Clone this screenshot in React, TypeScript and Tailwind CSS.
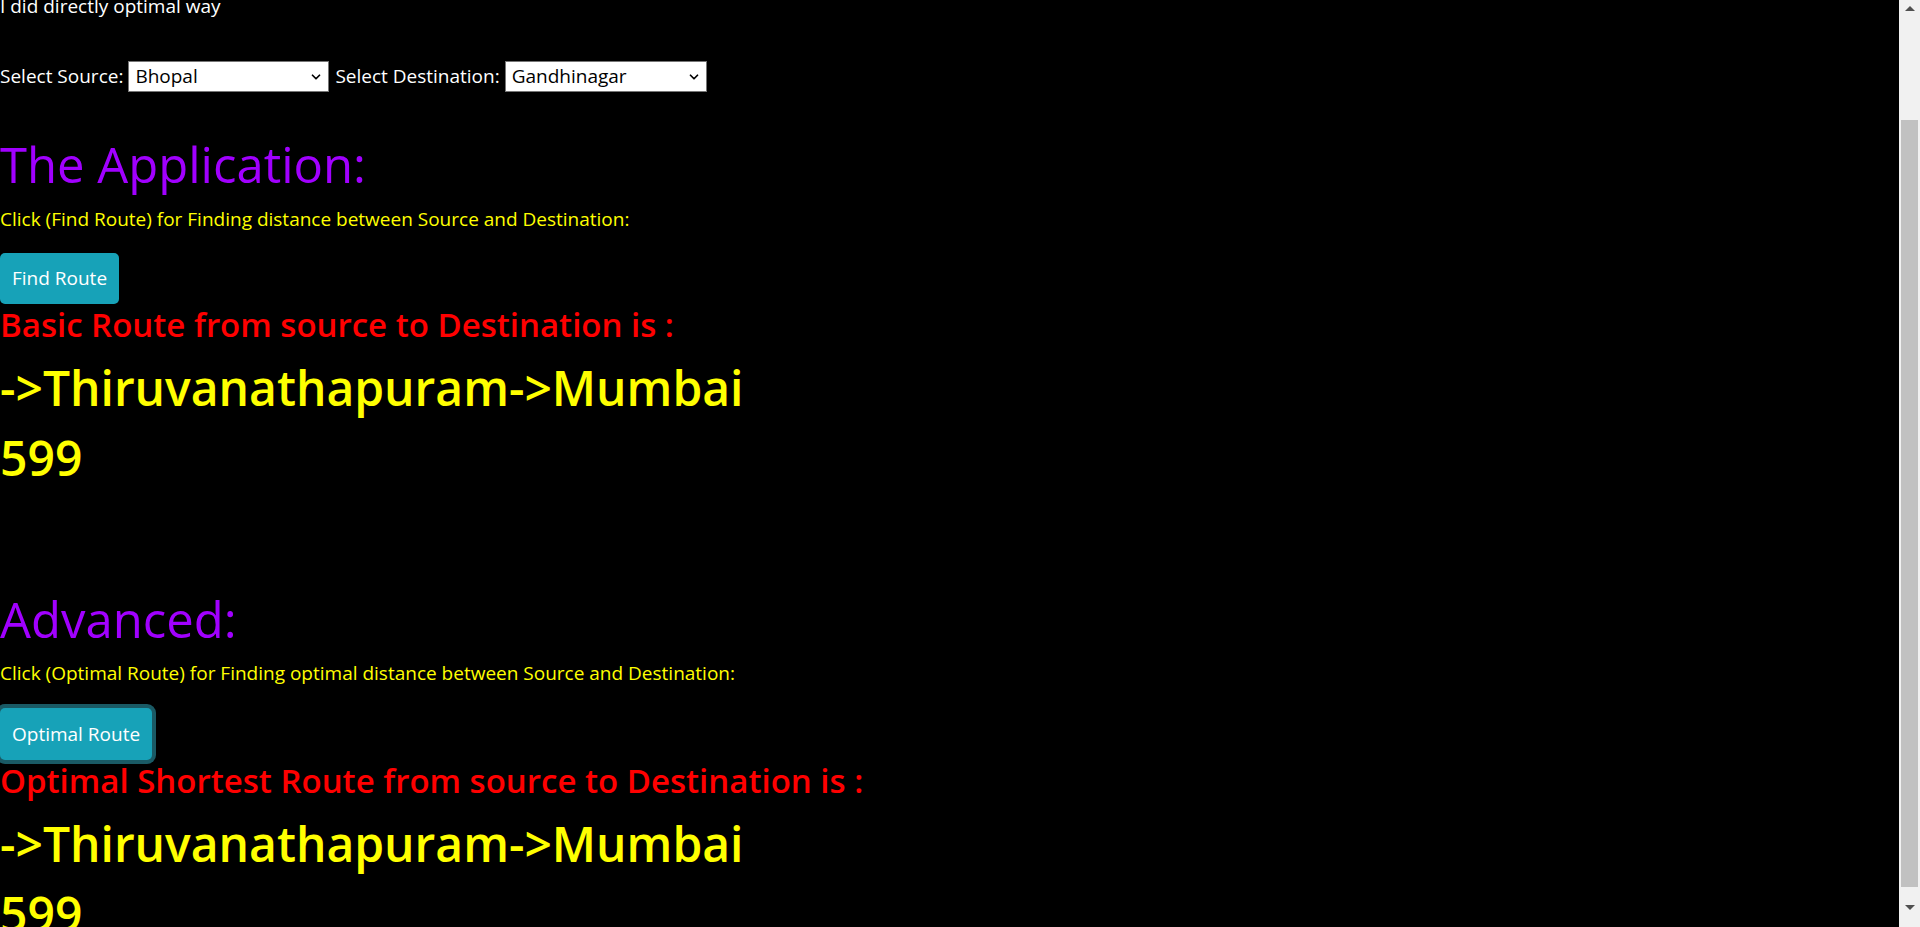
import { ChevronDown } from "lucide-react";

const cities = [
  "Bhopal",
  "Gandhinagar",
  "Mumbai",
  "Thiruvanathapuram",
  "Chennai",
  "Kolkata",
];

const CitySelect = ({ value, width }: { value: string; width: string }) => (
  <div className={`relative h-[31px] ${width}`}>
    <select
      defaultValue={value}
      className="appearance-none w-full h-full bg-white border border-[#767676] text-black pl-[6px] pr-[28px] text-[19px] leading-[29px] outline-none"
    >
      {cities.map((c) => (
        <option key={c} value={c}>
          {c}
        </option>
      ))}
    </select>
    <ChevronDown
      strokeWidth={3}
      className="absolute right-[6px] top-[9px] w-[14px] h-[14px] text-black pointer-events-none"
    />
  </div>
);

const RouteResult = ({ title, route, distance }: { title: string; route: string; distance: number }) => (
  <>
    <div className="h-[42px] leading-[42px] text-[33px] font-semibold text-[#ff0000] whitespace-nowrap">
      {title}
    </div>
    <div className="mt-[12px] h-[60px] leading-[60px] text-[48px] font-semibold text-[#ffff00] whitespace-nowrap">
      {route}
    </div>
    <div className="mt-[10px] h-[60px] leading-[60px] text-[48px] font-semibold text-[#ffff00]">
      {distance}
    </div>
  </>
);

export default function App() {
  const route = "->Thiruvanathapuram->Mumbai";

  return (
    <div
      className="flex w-full h-[927px] overflow-hidden bg-black"
      style={{ fontFamily: '"Open Sans", "Noto Sans", sans-serif' }}
    >
      <div className="flex-1 flex flex-col items-start overflow-hidden">
        <div className="-mt-[6px] h-[24px] leading-[24px] text-[19px] text-white whitespace-nowrap">
          I did directly optimal way
        </div>

        {/* source / destination pickers */}
        <div className="mt-[43px] flex items-center h-[31px] text-[19px] text-white gap-[5px]">
          <span className="leading-[31px]">Select Source:</span>
          <CitySelect value="Bhopal" width="w-[201px]" />
          <span className="leading-[31px] ml-[1px]">Select Destination:</span>
          <CitySelect value="Gandhinagar" width="w-[202px]" />
        </div>

        <h1 className="mt-[42px] h-[60px] leading-[60px] text-[49px] text-[#a100ff] whitespace-nowrap">
          The Application:
        </h1>
        <p className="mt-[10px] h-[30px] leading-[30px] text-[19px] text-[#ffff00] whitespace-nowrap">
          Click (Find Route) for Finding distance between Source and Destination:
        </p>
        <button className="mt-[19px] h-[51px] px-[12px] rounded-[5px] bg-[#17a2b8] text-white text-[19px] leading-[51px]">
          Find Route
        </button>
        <RouteResult title="Basic Route from source to Destination is :" route={route} distance={599} />

        <h1 className="mt-[101px] h-[60px] leading-[60px] text-[49px] text-[#a100ff]">Advanced:</h1>
        <p className="mt-[9px] h-[30px] leading-[30px] text-[19px] text-[#ffff00] whitespace-nowrap">
          Click (Optimal Route) for Finding optimal distance between Source and Destination:
        </p>
        <button className="mt-[20px] h-[52px] px-[12px] rounded-[5px] bg-[#17a2b8] text-white text-[19px] leading-[52px] shadow-[0_0_0_4px_#1a5a65]">
          Optimal Route
        </button>
        <div className="flex flex-col">
          <RouteResult
            title="Optimal Shortest Route from source to Destination is :"
            route={route}
            distance={599}
          />
        </div>
      </div>

      {/* scrollbar */}
      <div className="w-[21px] h-full bg-[#f1f1f1] flex flex-col items-center">
        <div className="h-[17px] flex items-center justify-center">
          <div className="w-0 h-0 border-l-[5px] border-r-[5px] border-b-[5px] border-l-transparent border-r-transparent border-b-[#505050]" />
        </div>
        <div className="mt-[103px] w-[17px] h-[767px] bg-[#c1c1c1]" />
        <div className="flex-1 flex items-center justify-center">
          <div className="w-0 h-0 border-l-[5px] border-r-[5px] border-t-[5px] border-l-transparent border-r-transparent border-t-[#505050]" />
        </div>
      </div>
    </div>
  );
}
